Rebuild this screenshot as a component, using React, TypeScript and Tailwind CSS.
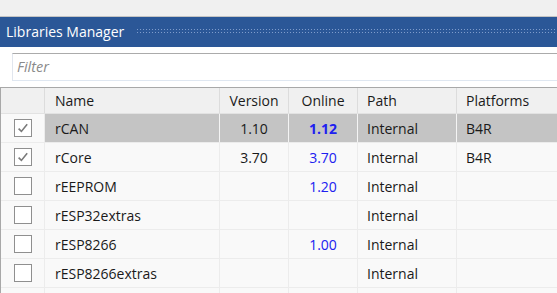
import React from "react";

type Row = {
  checked: boolean;
  name: string;
  version: string;
  online: string;
  path: string;
  platforms: string;
  selected?: boolean;
};

const rows: Row[] = [
  { checked: true, name: "rCAN", version: "1.10", online: "1.12", path: "Internal", platforms: "B4R", selected: true },
  { checked: true, name: "rCore", version: "3.70", online: "3.70", path: "Internal", platforms: "B4R" },
  { checked: false, name: "rEEPROM", version: "", online: "1.20", path: "Internal", platforms: "" },
  { checked: false, name: "rESP32extras", version: "", online: "", path: "Internal", platforms: "" },
  { checked: false, name: "rESP8266", version: "", online: "1.00", path: "Internal", platforms: "" },
  { checked: false, name: "rESP8266extras", version: "", online: "", path: "Internal", platforms: "" },
  { checked: false, name: "", version: "", online: "", path: "", platforms: "" },
];

const cols = "grid grid-cols-[44px_175px_69px_69px_99px_101px]";

function Check({ on }: { on: boolean }) {
  return (
    <div className="w-[18px] h-[18px] border border-[#8f8f8f] bg-white flex items-center justify-center">
      {on && (
        <svg width="14" height="14" viewBox="0 0 14 14">
          <path d="M2.6 7.6 L5.4 10.4 L11.2 3.2" fill="none" stroke="#7a7a7a" strokeWidth="1.6" />
        </svg>
      )}
    </div>
  );
}

export default function App() {
  return (
    <div
      className="w-[557px] h-[293px] overflow-hidden bg-white text-[14px] text-[#1a1a1a]"
      style={{ fontFamily: '"Open Sans", "Noto Sans", sans-serif' }}
    >
      <div className="h-[16px] bg-[#f0f0f0] border-b border-[#c4c4c4] box-content" />
      <div className="h-[30px] bg-[#2b5797] flex items-center">
        <span className="pl-[6px] pr-[13px] text-white text-[14px] leading-none whitespace-nowrap">
          Libraries Manager
        </span>
        <svg className="flex-1 h-[6px]" height="6">
          <defs>
            <pattern id="dots" width="3" height="3" patternUnits="userSpaceOnUse">
              <rect x="0" y="0" width="1" height="1" fill="#7f9ccb" />
            </pattern>
          </defs>
          <rect x="0" y="0" width="100%" height="6" fill="url(#dots)" />
        </svg>
      </div>
      <div className="pt-[6px] pl-[12px]">
        <div className="h-[28px] border-t border-t-[#ababab] border-l border-l-[#e1e6ee] border-b border-b-[#dfe7f1] flex items-center pl-[4px] w-[560px]">
          <span className="italic text-[#8a8a8a] text-[14.5px]">Filter</span>
        </div>
      </div>
      <div className="mt-[6px] border-t border-[#a8a8a8] border-l border-l-[#a8a8a8]">
        <div className={`${cols} h-[26px] bg-[#f0f0f0] border-b border-[#e2e2e2]`}>
          <div className="border-r border-[#dcdcdc]" />
          <div className="border-r border-[#dcdcdc] pl-[10px] flex items-center">Name</div>
          <div className="border-r border-[#dcdcdc] flex items-center justify-center">Version</div>
          <div className="border-r border-[#dcdcdc] flex items-center justify-center">Online</div>
          <div className="border-r border-[#dcdcdc] pl-[9px] flex items-center">Path</div>
          <div className="pl-[9px] flex items-center">Platforms</div>
        </div>
        {rows.map((r, i) => {
          const bg = r.selected ? "bg-[#c4c4c4]" : "bg-[#f9f9f9]";
          const sep = r.selected ? "border-r border-[#f4f4f4]" : "border-r border-[#ececec]";
          return (
            <div key={i} className={`${cols} h-[29px] border-b border-[#ececec]`}>
              <div className="bg-[#f9f9f9] border-r border-[#ececec] flex items-center justify-center pl-[1px]">
                <Check on={r.checked} />
              </div>
              <div className={`${bg} ${sep} pl-[10px] flex items-center`}>{r.name}</div>
              <div className={`${bg} ${sep} flex items-center justify-center`}>{r.version}</div>
              <div
                className={`${bg} ${sep} flex items-center justify-center text-[#2020f0] ${r.selected ? "font-bold" : ""}`}
              >
                {r.online}
              </div>
              <div className={`${bg} ${sep} pl-[9px] flex items-center`}>{r.path}</div>
              <div className={`${bg} pl-[9px] flex items-center`}>{r.platforms}</div>
            </div>
          );
        })}
      </div>
    </div>
  );
}
